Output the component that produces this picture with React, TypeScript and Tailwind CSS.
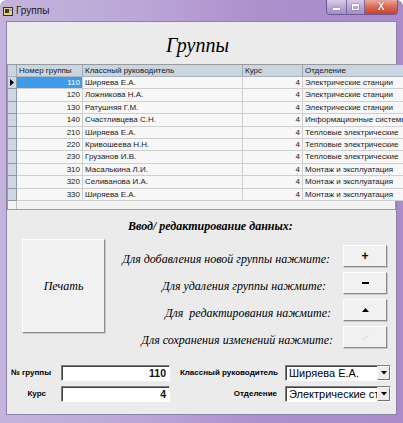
const rows: [string, string, string, string][] = [
  ['110', 'Ширяева Е.А.', '4', 'Электрические станции'],
  ['120', 'Ложникова Н.А.', '4', 'Электрические станции'],
  ['130', 'Ратушняя Г.М.', '4', 'Электрические станции'],
  ['140', 'Счастливцева С.Н.', '4', 'Информационные системы'],
  ['210', 'Ширяева Е.А.', '4', 'Тепловые электрические'],
  ['220', 'Кривошеева Н.Н.', '4', 'Тепловые электрические'],
  ['230', 'Грузанов И.В.', '4', 'Тепловые электрические'],
  ['310', 'Масалькина Л.И.', '4', 'Монтаж и эксплуатация'],
  ['320', 'Селиванова И.А.', '4', 'Монтаж и эксплуатация'],
  ['330', 'Ширяева Е.А.', '4', 'Монтаж и эксплуатация'],
];

const actions = [
  { label: 'Для добавления новой группы нажмите:', pr: 'pr-[13px]', glyph: '+' },
  { label: 'Для удаления группы нажмите:', pr: 'pr-[17px]', glyph: '−' },
  { label: 'Для  редактирования нажмите:', pr: 'pr-[12px]', glyph: '▲' },
  { label: 'Для сохранения изменений нажмите:', pr: 'pr-[10px]', glyph: '✓' },
];

const serif = "font-['Liberation_Serif',serif]";
const sans = "font-['Liberation_Sans',Arial,sans-serif]";

function Raised({ className, children }: { className: string; children?: React.ReactNode }) {
  return (
    <div
      className={`flex items-center justify-center bg-[#f1f1f1] border border-t-white border-l-white border-r-[#8a8a8a] border-b-[#8a8a8a] shadow-[1px_1px_0_#c9c9c9] ${className}`}
    >
      {children}
    </div>
  );
}

function Combo({ value }: { value: string }) {
  return (
    <div className="w-[106px] h-[16px] flex bg-white border border-t-[#7f7f7f] border-l-[#7f7f7f] border-r-white border-b-white shadow-[inset_1px_1px_0_#404040]">
      <div className={`flex-1 overflow-hidden whitespace-nowrap pl-[3px] text-[11px] font-normal leading-[14px] text-black ${sans}`}>{value}</div>
      <div className="w-[13px] h-[14px] flex items-center justify-center bg-[#ececec] border border-t-white border-l-white border-r-[#707070] border-b-[#707070]">
        <svg width="6" height="4" viewBox="0 0 6 4"><path d="M0 0h6L3 3.5z" fill="#000" /></svg>
      </div>
    </div>
  );
}

function Field({ value }: { value: string }) {
  return (
    <div
      className={`w-[109px] h-[16px] bg-white border border-t-[#7f7f7f] border-l-[#7f7f7f] border-r-white border-b-white shadow-[inset_1px_1px_0_#404040] text-right pr-[3px] text-[10.5px] font-bold leading-[14px] text-[#111] ${sans}`}
    >
      {value}
    </div>
  );
}

export default function App() {
  return (
    <div className="w-[403px] h-[423px] overflow-hidden rounded-t-[6px] bg-[linear-gradient(90deg,#c4b4dc_0%,#bba6d7_35%,#ab90cc_65%,#a98bcb_100%)] flex flex-col">
      {/* Заголовок окна */}
      <div className="h-[21px] flex items-start relative">
        <div className="flex items-center mt-[5px] ml-[3px] gap-[3px]">
          <svg width="10" height="9" viewBox="0 0 10 9">
            <rect x="0.5" y="0.5" width="9" height="8" fill="#e7d27a" stroke="#333" />
            <rect x="2" y="2" width="4" height="4" fill="#3a3a3a" />
            <rect x="6.5" y="2" width="2" height="2" fill="#7aa4d8" />
          </svg>
          <span className={`text-[10px] leading-[12px] text-[#1a1a1a] ${sans}`}>Группы</span>
        </div>
        <div className="ml-auto mr-[5px] flex h-[15px] rounded-b-[4px] overflow-hidden border border-t-0 border-[#6e5a8e]">
          <div className="w-[20px] flex items-center justify-center bg-[linear-gradient(#d8cbe8,#b7a3d3_55%,#a58dc7)] border-r border-[#7a679a]">
            <div className="w-[7px] h-[2px] bg-white mt-[4px] shadow-[0_0_1px_#333]" />
          </div>
          <div className="w-[18px] flex items-center justify-center bg-[linear-gradient(#d8cbe8,#b7a3d3_55%,#a58dc7)] border-r border-[#7a679a]">
            <div className="w-[7px] h-[6px] border border-white border-t-2 shadow-[0_0_1px_#333]" />
          </div>
          <div className="w-[32px] flex items-center justify-center bg-[linear-gradient(#eba99a,#d96a55_50%,#c8402c)]">
            <span className={`text-[10px] font-bold text-white leading-none [text-shadow:0_0_1px_#400] ${sans}`}>X</span>
          </div>
        </div>
      </div>

      {/* Клиентская область */}
      <div className="mx-[6px] h-[394px] bg-[#ebebeb] border border-[#8f7fa9] flex flex-col">
        <div className={`h-[42px] flex items-center justify-center pt-[4px] pr-[8px] text-[20px] italic text-black ${serif}`}>
          Группы
        </div>

        {/* Таблица */}
        <div className={`h-[146px] flex border border-[#9a9a9a] bg-[#f3f3f3] text-[8px] text-[#1a1a1a] ${sans}`}>
          <div className="flex-1 flex flex-col">
            <div className="h-[12px] flex bg-[#c9d5e1] border-b border-[#a9b4bf] leading-[11px]">
              <div className="w-[9px] border-r border-[#9aa6b2]" />
              <div className="w-[66px] border-r border-[#9aa6b2] pl-[2px]">Номер группы</div>
              <div className="w-[160px] border-r border-[#9aa6b2] pl-[2px]">Классный руководитель</div>
              <div className="w-[60px] border-r border-[#9aa6b2] pl-[2px]">Курс</div>
              <div className="flex-1 pl-[2px]">Отделение</div>
            </div>
            {rows.map((r, i) => (
              <div key={r[0]} className="h-[12.4px] flex leading-[11px]">
                <div className="w-[9px] bg-[#cfd8e2] border-r border-b border-[#8e9aa6] flex items-center justify-center">
                  {i === 0 && <svg width="4" height="7" viewBox="0 0 4 7"><path d="M0 0l4 3.5L0 7z" fill="#000" /></svg>}
                </div>
                <div className={`w-[66px] border-r border-b border-[#cfcfcf] text-right pr-[2px] ${i === 0 ? 'bg-[#3d9be9] text-white' : 'bg-[#f7f7f7]'}`}>{r[0]}</div>
                <div className="w-[160px] border-r border-b border-[#cfcfcf] bg-[#f7f7f7] pl-[2px] whitespace-nowrap overflow-hidden">{r[1]}</div>
                <div className="w-[60px] border-r border-b border-[#cfcfcf] bg-[#f7f7f7] text-right pr-[2px]">{r[2]}</div>
                <div className="flex-1 border-b border-[#cfcfcf] bg-[#f7f7f7] pl-[2px] whitespace-nowrap overflow-hidden">{r[3]}</div>
              </div>
            ))}
            <div className="flex-1 flex">
              <div className="w-[9px] border-r border-[#c4c4c4]" />
            </div>
          </div>
          {/* Полоса прокрутки */}
          <div className="w-[11px] flex flex-col bg-[#ebebeb] border-l border-[#dcdcdc]">
            <div className="h-[12px] flex items-center justify-center">
              <svg width="5" height="3" viewBox="0 0 5 3"><path d="M0 3L2.5 0 5 3z" fill="#555" /></svg>
            </div>
            <div className="h-[40px] mx-[1px] rounded-[2px] bg-[linear-gradient(90deg,#f4f4f4,#dedede)] border border-[#9c9c9c] flex items-center justify-center">
              <div className="w-[4px] h-[4px] border-y border-[#8a8a8a]" />
            </div>
            <div className="flex-1" />
            <div className="h-[12px] flex items-center justify-center">
              <svg width="5" height="3" viewBox="0 0 5 3"><path d="M0 0h5L2.5 3z" fill="#555" /></svg>
            </div>
          </div>
        </div>

        {/* Ввод / редактирование */}
        <div className={`mt-[8px] h-[16px] pl-[121px] text-[12px] leading-[16px] font-bold italic text-black ${serif}`}>
          Ввод/ редактирование данных:
        </div>

        <div className="flex items-start">
          <Raised className="ml-[15px] mt-[5px] w-[83px] h-[94px]">
            <span className={`text-[12px] italic text-black ${serif}`}>Печать</span>
          </Raised>
          <div className="mt-[11px] w-[282px] flex flex-col gap-[5px]">
            {actions.map((a, i) => (
              <div key={a.glyph} className="h-[22px] flex items-center">
                <div className={`flex-1 text-right pt-[5px] whitespace-pre text-[12px] italic text-black ${serif} ${a.pr}`}>{a.label}</div>
                <Raised className="w-[44px] h-[22px]">
                  {i === 0 && <span className={`text-[12px] font-bold leading-none ${sans}`}>+</span>}
                  {i === 1 && <div className="w-[7px] h-[2px] bg-black" />}
                  {i === 2 && <svg width="7" height="4" viewBox="0 0 7 4"><path d="M0 4L3.5 0 7 4z" fill="#000" /></svg>}
                  {i === 3 && <svg width="8" height="5" viewBox="0 0 8 5"><path d="M0.5 3L2.5 4.5 7.5 0.5" fill="none" stroke="#d0d0d0" strokeWidth="1" /></svg>}
                </Raised>
              </div>
            ))}
          </div>
        </div>

        {/* Поля */}
        <div className={`mt-[17px] flex flex-col gap-[5px] text-[8px] font-bold text-black ${sans}`}>
          <div className="h-[16px] flex items-center">
            <div className="w-[54px] text-right pr-[10px]">№ группы</div>
            <Field value="110" />
            <div className="w-[115px] text-right pr-[7px]">Классный руководитель</div>
            <Combo value="Ширяева Е.А." />
          </div>
          <div className="h-[16px] flex items-center">
            <div className="w-[54px] text-right pr-[15px]">Курс</div>
            <Field value="4" />
            <div className="w-[115px] text-right pr-[8px]">Отделение</div>
            <Combo value="Электрические станции" />
          </div>
        </div>
      </div>
    </div>
  );
}
